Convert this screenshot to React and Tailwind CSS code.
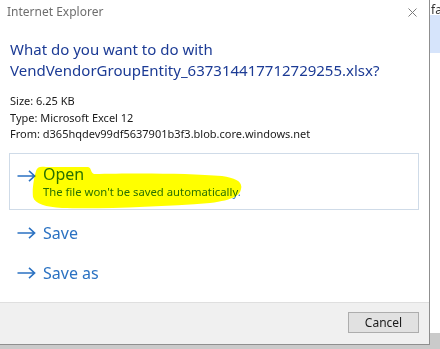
import React from "react";

const Arrow = () => (
  <svg width="19" height="12" viewBox="0 0 19 12" className="shrink-0">
    <path d="M0.5 6 H17.5 M12 0.8 L17.6 6 L12 11.2" fill="none" stroke="#2b72c2" strokeWidth="1.6" />
  </svg>
);

export default function App() {
  const font = { fontFamily: '"Noto Sans", "Open Sans", sans-serif' };
  return (
    <div className="w-[440px] h-[349px] flex bg-white overflow-hidden" style={font}>
      <div className="w-[430px] flex flex-col">
        <div className="h-[345px] flex flex-col border-r border-b border-[#8f8f8f] bg-white relative">
          <div className="flex justify-between items-start pl-[7px] pr-[12px] pt-[4px] h-[39px]">
            <span className="text-[12px] leading-[16px] text-[#6e6e6e]">Internet Explorer</span>
            <svg width="9" height="9" viewBox="0 0 9 9" className="mt-[4px]">
              <path d="M0.5 0.5 L8.5 8.5 M8.5 0.5 L0.5 8.5" stroke="#7a7a7a" strokeWidth="1" />
            </svg>
          </div>
          <div className="pl-[10px] text-[15px] leading-[21px] text-[#1c3b95]">
            <div>What do you want to do with</div>
            <div>VendVendorGroupEntity_637314417712729255.xlsx?</div>
          </div>
          <div className="pl-[10px] pt-[12px] text-[11px] leading-[16.5px] text-[#1a1a1a]">
            <div>Size: 6.25 KB</div>
            <div>Type: Microsoft Excel 12</div>
            <div>From: d365hqdev99df5637901b3f3.blob.core.windows.net</div>
          </div>
          <div className="ml-[9px] mr-[10px] mt-[10px] h-[57px] border border-[#cfdbe8] relative flex items-start pl-[7px] pt-[10px]">
            <div className="pt-[6px]"><Arrow /></div>
            <div className="pl-[7px] flex flex-col text-[#2b72c2]">
              <span className="text-[16px] leading-[20px]">Open</span>
              <span className="text-[11.3px] leading-[16px]">The file won't be saved automatically.</span>
            </div>
            <svg className="absolute left-0 top-0 mix-blend-multiply pointer-events-none" width="411" height="57" viewBox="0 0 411 57">
              <path
                d="M26 17 C27 13 30 12 36 13 L78 13 C82 14 80 18 84 20 C120 19 180 19 212 22 C226 24 233 28 231 35 C230 41 224 46 200 49 C150 53 90 55 52 54 C36 53 25 50 23 43 C22 35 24 24 26 17 Z"
                fill="#ffff00"
              />
            </svg>
          </div>
          <div className="pl-[17px] flex flex-col text-[16px] leading-[20px] text-[#2b72c2]">
            <div className="h-[40px] flex items-center gap-[7px] mt-[3px]">
              <Arrow />
              <span>Save</span>
            </div>
            <div className="h-[40px] flex items-center gap-[7px]">
              <Arrow />
              <span>Save as</span>
            </div>
          </div>
          <div className="mt-auto h-[42px] bg-[#f0f0f0] border-t border-[#dfdfdf] flex justify-end items-start pt-[9px] pr-[10px]">
            <button className="w-[71px] h-[21px] bg-[#e1e1e1] border border-[#adadad] text-[12px] leading-[18px] text-[#1a1a1a]" style={font}>
              Cancel
            </button>
          </div>
        </div>
        <div className="flex-1 bg-[#cacaca]" />
      </div>
      <div className="w-[10px] flex flex-col overflow-hidden">
        <div className="h-[15px] text-[12px] leading-[15px] text-[#333] whitespace-nowrap pl-[1px] pt-[2px]">fa</div>
        <div className="h-[38px] bg-[#d6e4fb]" />
        <div className="flex-1" />
        <div className="h-[16px] bg-[#cacaca]" />
      </div>
    </div>
  );
}
